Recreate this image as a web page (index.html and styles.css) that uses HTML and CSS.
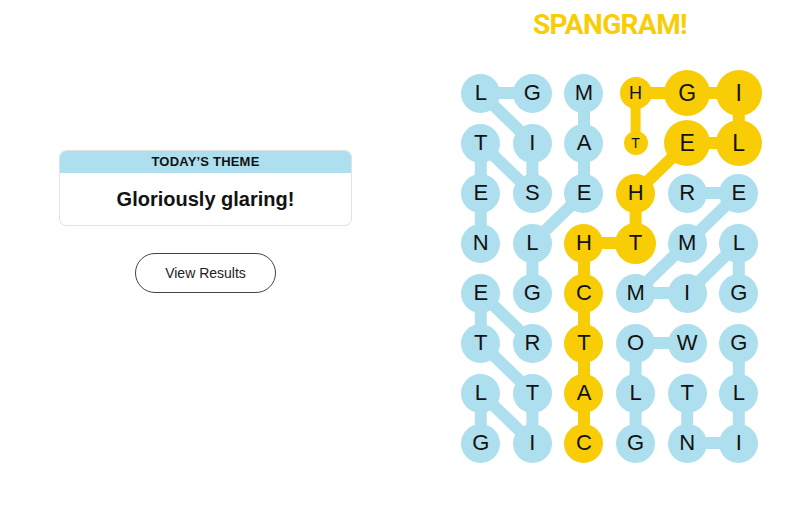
FILE: index.html
```html
<!DOCTYPE html>
<html lang="en">
<head>
<meta charset="utf-8">
<title>Strands</title>
<link rel="stylesheet" href="styles.css">
</head>
<body>
<main class="game">
  <section class="side">
    <div class="card">
      <div class="card-head">TODAY’S THEME</div>
      <div class="card-body">Gloriously glaring!</div>
    </div>
    <button class="results">View Results</button>
  </section>
  <section class="play">
    <h1 class="title">SPANGRAM!</h1>
    <div class="board">
      <svg class="links" width="310" height="400" viewBox="0 0 310 400" aria-hidden="true">
        <g class="blue">
          <!-- GLISTEN -->
          <line x1="77.4" y1="25" x2="25.8" y2="25"/>
          <line x1="25.8" y1="25" x2="77.4" y2="75"/>
          <line x1="77.4" y1="75" x2="77.4" y2="125"/>
          <line x1="77.4" y1="125" x2="25.8" y2="75"/>
          <line x1="25.8" y1="75" x2="25.8" y2="125"/>
          <line x1="25.8" y1="125" x2="25.8" y2="175"/>
          <!-- GLEAM -->
          <line x1="129" y1="25" x2="129" y2="75"/>
          <line x1="129" y1="75" x2="129" y2="125"/>
          <line x1="129" y1="125" x2="77.4" y2="175"/>
          <line x1="77.4" y1="175" x2="77.4" y2="225"/>
          <!-- GLIMMER -->
          <line x1="232.2" y1="125" x2="283.8" y2="125"/>
          <line x1="283.8" y1="125" x2="232.2" y2="175"/>
          <line x1="232.2" y1="175" x2="180.6" y2="225"/>
          <line x1="180.6" y1="225" x2="232.2" y2="225"/>
          <line x1="232.2" y1="225" x2="283.8" y2="175"/>
          <line x1="283.8" y1="175" x2="283.8" y2="225"/>
          <!-- GLITTER -->
          <line x1="25.8" y1="375" x2="25.8" y2="325"/>
          <line x1="25.8" y1="325" x2="77.4" y2="375"/>
          <line x1="77.4" y1="375" x2="77.4" y2="325"/>
          <line x1="77.4" y1="325" x2="25.8" y2="275"/>
          <line x1="25.8" y1="275" x2="25.8" y2="225"/>
          <line x1="25.8" y1="225" x2="77.4" y2="275"/>
          <!-- GLOW -->
          <line x1="180.6" y1="375" x2="180.6" y2="325"/>
          <line x1="180.6" y1="325" x2="180.6" y2="275"/>
          <line x1="180.6" y1="275" x2="232.2" y2="275"/>
          <!-- GLINT -->
          <line x1="283.8" y1="275" x2="283.8" y2="325"/>
          <line x1="283.8" y1="325" x2="283.8" y2="375"/>
          <line x1="283.8" y1="375" x2="232.2" y2="375"/>
          <line x1="232.2" y1="375" x2="232.2" y2="325"/>
        </g>
        <g class="gold">
          <line class="thin" x1="180.6" y1="75" x2="180.6" y2="25"/>
          <line x1="180.6" y1="25" x2="232.2" y2="25"/>
          <line x1="232.2" y1="25" x2="283.8" y2="25"/>
          <line x1="283.8" y1="25" x2="283.8" y2="75"/>
          <line x1="283.8" y1="75" x2="232.2" y2="75"/>
          <line x1="232.2" y1="75" x2="180.6" y2="125"/>
          <line x1="180.6" y1="125" x2="180.6" y2="175"/>
          <line x1="180.6" y1="175" x2="129" y2="175"/>
          <line x1="129" y1="175" x2="129" y2="225"/>
          <line x1="129" y1="225" x2="129" y2="275"/>
          <line x1="129" y1="275" x2="129" y2="325"/>
          <line x1="129" y1="325" x2="129" y2="375"/>
        </g>
      </svg>
      <div class="grid">
        <div class="cell"><span class="dot">L</span></div>
        <div class="cell"><span class="dot">G</span></div>
        <div class="cell"><span class="dot">M</span></div>
        <div class="cell"><span class="dot sp s1">H</span></div>
        <div class="cell"><span class="dot sp big">G</span></div>
        <div class="cell"><span class="dot sp big">I</span></div>

        <div class="cell"><span class="dot">T</span></div>
        <div class="cell"><span class="dot">I</span></div>
        <div class="cell"><span class="dot">A</span></div>
        <div class="cell"><span class="dot sp s2">T</span></div>
        <div class="cell"><span class="dot sp big">E</span></div>
        <div class="cell"><span class="dot sp big">L</span></div>

        <div class="cell"><span class="dot">E</span></div>
        <div class="cell"><span class="dot">S</span></div>
        <div class="cell"><span class="dot">E</span></div>
        <div class="cell"><span class="dot sp">H</span></div>
        <div class="cell"><span class="dot">R</span></div>
        <div class="cell"><span class="dot">E</span></div>

        <div class="cell"><span class="dot">N</span></div>
        <div class="cell"><span class="dot">L</span></div>
        <div class="cell"><span class="dot sp">H</span></div>
        <div class="cell"><span class="dot sp mid">T</span></div>
        <div class="cell"><span class="dot">M</span></div>
        <div class="cell"><span class="dot">L</span></div>

        <div class="cell"><span class="dot">E</span></div>
        <div class="cell"><span class="dot">G</span></div>
        <div class="cell"><span class="dot sp">C</span></div>
        <div class="cell"><span class="dot">M</span></div>
        <div class="cell"><span class="dot">I</span></div>
        <div class="cell"><span class="dot">G</span></div>

        <div class="cell"><span class="dot">T</span></div>
        <div class="cell"><span class="dot">R</span></div>
        <div class="cell"><span class="dot sp">T</span></div>
        <div class="cell"><span class="dot">O</span></div>
        <div class="cell"><span class="dot">W</span></div>
        <div class="cell"><span class="dot">G</span></div>

        <div class="cell"><span class="dot">L</span></div>
        <div class="cell"><span class="dot">T</span></div>
        <div class="cell"><span class="dot sp">A</span></div>
        <div class="cell"><span class="dot">L</span></div>
        <div class="cell"><span class="dot">T</span></div>
        <div class="cell"><span class="dot">L</span></div>

        <div class="cell"><span class="dot">G</span></div>
        <div class="cell"><span class="dot">I</span></div>
        <div class="cell"><span class="dot sp">C</span></div>
        <div class="cell"><span class="dot">G</span></div>
        <div class="cell"><span class="dot">N</span></div>
        <div class="cell"><span class="dot">I</span></div>
      </div>
    </div>
  </section>
</main>
</body>
</html>
```
FILE: styles.css
```css
* { box-sizing: border-box; }

html, body {
  margin: 0;
  padding: 0;
  background: #ffffff;
}

body {
  font-family: "Liberation Sans", Arial, sans-serif;
  color: #121212;
}

.game {
  display: flex;
  width: 800px;
  height: 523px;
}

.side {
  width: 411px;
  flex: none;
  display: flex;
  flex-direction: column;
  align-items: center;
  padding-top: 150px;
}

.card {
  width: 293px;
  border: 1px solid #e2e2e2;
  border-radius: 7px;
  overflow: hidden;
  background: #fff;
}

.card-head {
  height: 22px;
  background: #aedfee;
  font-size: 13px;
  font-weight: 700;
  letter-spacing: 0.2px;
  line-height: 22px;
  text-align: center;
  color: #121212;
}

.card-body {
  height: 52px;
  display: flex;
  align-items: center;
  justify-content: center;
  font-size: 20px;
  font-weight: 700;
  color: #121212;
}

.results {
  margin-top: 27px;
  width: 141px;
  height: 40px;
  border: 1px solid #444;
  border-radius: 20px;
  background: #fff;
  font-family: "Liberation Sans", Arial, sans-serif;
  font-size: 14px;
  color: #222;
  padding: 0;
}

.play {
  flex: 1;
  display: flex;
  flex-direction: column;
  align-items: center;
  padding-left: 9px;
}

.title {
  margin: 11px 0 0;
  font-family: Roboto, "Liberation Sans", sans-serif;
  font-weight: 700;
  font-size: 28px;
  line-height: 28px;
  letter-spacing: -0.6px;
  color: #f8cd05;
}

.board {
  position: relative;
  margin-top: 29px;
  width: 310px;
  height: 400px;
}

.links {
  position: absolute;
  left: 0;
  top: 0;
}

.links line {
  stroke-width: 12;
  stroke-linecap: round;
}

.links .blue line { stroke: #aedfee; }
.links .gold line { stroke: #f8cd05; }
.links .gold line.thin { stroke-width: 10; }

.grid {
  position: relative;
  display: grid;
  grid-template-columns: repeat(6, 51.6px);
  grid-template-rows: repeat(8, 50px);
}

.cell {
  display: flex;
  align-items: center;
  justify-content: center;
}

.dot {
  width: 39px;
  height: 39px;
  flex: none;
  border-radius: 50%;
  background: #aedfee;
  display: flex;
  align-items: center;
  justify-content: center;
  font-size: 22px;
  color: #121212;
}

.dot.sp { background: #f8cd05; }
.dot.big { width: 46px; height: 46px; font-size: 23px; }
.dot.mid { width: 41px; height: 41px; }
.dot.s1 { width: 32px; height: 32px; font-size: 18px; }
.dot.s2 { width: 24px; height: 24px; font-size: 14px; }
```
